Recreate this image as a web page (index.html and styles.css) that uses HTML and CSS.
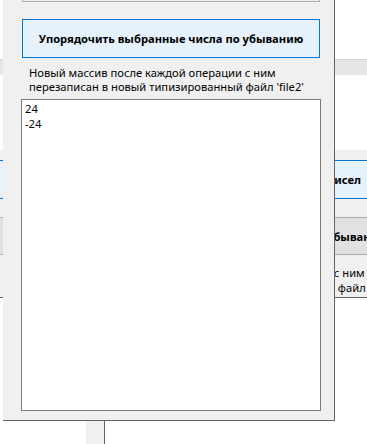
FILE: index.html
```html
<!DOCTYPE html>
<html>
<head>
  <meta charset="utf-8">
  <link rel="stylesheet" href="styles.css">
</head>
<body>
<div class="desktop">
  <div class="back-window">
    <div class="back-white"></div>
    <div class="back-strip"></div>
    <div class="back-white back-white-low"></div>
    <div class="back-panel">
      <div class="back-btn back-btn-blue"><span class="back-text">чисел</span></div>
      <div class="back-btn back-btn-gray"><span class="back-text">убыванию</span></div>
      <div class="back-label">
        <span class="back-line back-line-1">и с ним</span>
        <span class="back-line back-line-2">й файл 'file2'</span>
      </div>
    </div>
  </div>

  <div class="tab-stub"></div>

  <div class="form-window">
    <div class="top-box"></div>
    <button class="sort-btn">Упорядочить выбранные числа по убыванию</button>
    <p class="info">Новый массив после каждой операции с ним перезаписан в новый типизированный файл 'file2'</p>
    <div class="output">24<br>-24</div>
  </div>
</div>
</body>
</html>
```

FILE: styles.css
```css
html, body {
  margin: 0;
  padding: 0;
  background: #fff;
  overflow: hidden;
}

.desktop {
  position: relative;
  width: 367px;
  height: 444px;
  overflow: hidden;
  font-family: "Noto Sans", "Segoe UI", sans-serif;
  font-size: 11.2px;
  color: #000;
}

/* window behind */
.back-window {
  position: absolute;
  left: -50px;
  top: 0;
  width: 470px;
  display: flex;
  flex-direction: column;
}
.back-white {
  height: 59px;
  background: #fff;
}
.back-white-low {
  height: 75px;
}
.back-strip {
  height: 15px;
  background: #e6e6e6;
  border-top: 1px solid #d6d6d6;
}
.back-panel {
  background: #f0f0f0;
  border-bottom: 1px solid #646464;
  height: 148px;
  box-sizing: border-box;
  padding-top: 10px;
}
.back-btn {
  box-sizing: border-box;
  height: 39px;
  display: flex;
  align-items: center;
  font-weight: bold;
  white-space: nowrap;
}
.back-btn-blue {
  background: #e5f1fb;
  border-top: 1px solid #0078d7;
  border-bottom: 1px solid #0078d7;
}
.back-btn-gray {
  margin-top: 18px;
  height: 38px;
  background: #e1e1e1;
  border-top: 1px solid #adadad;
  border-bottom: 1px solid #adadad;
}
.back-text {
  padding-left: 377px;
}
.back-label {
  display: flex;
  flex-direction: column;
  padding-top: 10px;
  line-height: 15px;
  white-space: nowrap;
}
.back-line-1 {
  padding-left: 374px;
}
.back-line-2 {
  padding-left: 378px;
}

.tab-stub {
  position: absolute;
  left: 86px;
  top: 400px;
  width: 18px;
  height: 60px;
  background: #f0f0f0;
  border-right: 1px solid #646464;
}

/* front window */
.form-window {
  position: absolute;
  left: 3px;
  top: -30px;
  width: 332px;
  height: 451px;
  box-sizing: border-box;
  background: #f0f0f0;
  border-right: 1px solid #646464;
  border-bottom: 1px solid #646464;
  padding-left: 19px;
  display: flex;
  flex-direction: column;
  align-items: flex-start;
}
.top-box {
  width: 298px;
  height: 32px;
  box-sizing: border-box;
  background: #ececec;
  border: 1px solid #adadad;
}
.sort-btn {
  margin-top: 17px;
  width: 298px;
  height: 39px;
  box-sizing: border-box;
  background: #e5f1fb;
  border: 1px solid #0078d7;
  border-radius: 0;
  padding: 0;
  font-family: inherit;
  font-size: 11.2px;
  font-weight: bold;
  color: #000;
}
.info {
  margin: 8px 0 0 7px;
  width: 292px;
  line-height: 14px;
}
.output {
  margin: 5px 0 0 -1px;
  width: 300px;
  height: 312px;
  box-sizing: border-box;
  background: #fff;
  border: 1px solid #7a7a7a;
  padding: 1px 3px;
  line-height: 15px;
}
```
